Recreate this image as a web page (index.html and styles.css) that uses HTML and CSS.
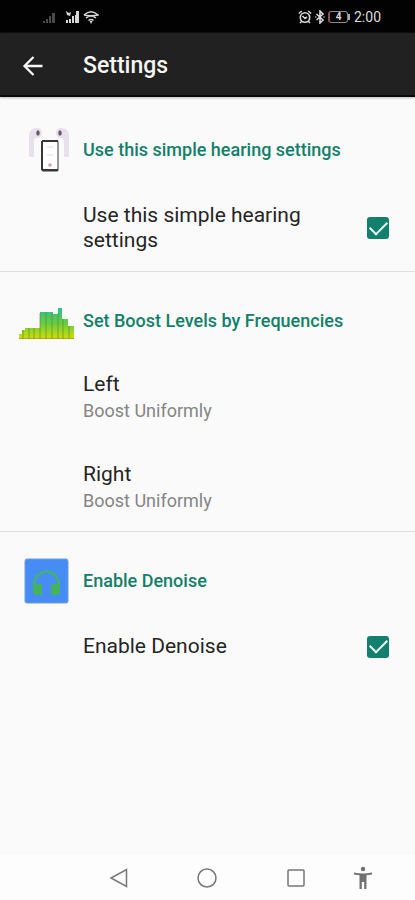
FILE: index.html
```html
<!DOCTYPE html>
<html lang="en">
<head>
<meta charset="utf-8">
<meta name="viewport" content="width=device-width, initial-scale=1">
<title>Settings</title>
<link rel="stylesheet" href="styles.css">
</head>
<body>
<div class="status">
  <div class="status-left">
    <svg width="14" height="14" viewBox="0 0 14 14" fill="#4a4a4a"><path d="M0 11h2v2H0zM3 9h2v4H3zM6 6h2v7H6zM9 3h3v10H9z"/></svg>
    <svg class="signal" width="14" height="14" viewBox="0 0 14 14" fill="#d8d8d8"><path d="M0 10h2v3H0zM3 9h2v4H3zM6 6h2v7H6zM10 1h3v12h-3zM0 1l3 2 2-1-1 4-3-1zM9 5h1v8H9z"/></svg>
    <svg width="16" height="14" viewBox="0 0 16 14" fill="none" stroke="#d8d8d8" stroke-width="1.6"><path d="M1 5Q8-1.500 15 5Q8 6.500 1 5M3 8Q8 4 13 8M5.500 10.500Q8 8.500 10.500 10.500"/><path d="M6.500 11h3L8 14z" fill="#d8d8d8" stroke="none"/></svg>
  </div>
  <div class="status-right">
    <svg width="14" height="14" viewBox="0 0 14 14" fill="none" stroke="#d8d8d8" stroke-width="1.600"><circle cx="7" cy="7.500" r="4.700"/><path d="M.8 3.500L3.800 1M13.200 3.500L10.200 1M4.500 6L7 8.500 9 7M3.500 11.500L2 13M10.500 11.500L12 13"/></svg>
    <svg width="10" height="14" viewBox="0 0 10 14" fill="none" stroke="#d8d8d8" stroke-width="1.600"><path d="M1.500 4l6.500 6-3 3V1l3 3-6.500 6M.3 7h1M8.500 7h1"/></svg>
    <div class="battery">4</div>
    <time>2:00</time>
  </div>
</div>
<header class="appbar">
  <button class="back" aria-label="Back"><svg width="24" height="24" viewBox="0 0 24 24" fill="none" stroke="#f5f5f5" stroke-width="2.300"><path d="M21.500 12H4M12.500 3L3.500 12l9 9"/></svg></button>
  <h1>Settings</h1>
</header>
<main>
  <section>
    <div class="head">
      <svg width="56" height="56" viewBox="0 3 56 56">
        <g fill="#e9e0ed"><path d="M10 17c0-5 3-8 8-8 3 0 5 2 5 5s-2 5-5 5c-2 0-3 1-3 3v16h-5z"/><path d="M50 17c0-5-3-8-8-8-3 0-5 2-5 5s2 5 5 5c2 0 3 1 3 3v16h5z"/></g>
        <ellipse cx="19" cy="14" rx="1.700" ry="2.700" fill="#625868"/><ellipse cx="41" cy="14" rx="1.700" ry="2.700" fill="#625868"/>
        <rect x="23" y="22" width="16" height="30" rx="1.500" fill="#fdfdfd" stroke="#777" stroke-width="1.500"/>
        <path d="M23 22h16M23 51h16M23 22v29" stroke="#363636" stroke-width="2"/>
        <path d="M28 28h6M28 36h6" stroke="#ddd"/><circle cx="31" cy="46" r="1.800" fill="#c9aaa9"/>
      </svg>
      <h2>Use this simple hearing settings</h2>
    </div>
    <div class="items">
      <label class="row"><span class="name">Use this simple hearing settings</span><input type="checkbox" checked></label>
    </div>
  </section>
  <section>
    <div class="head">
      <svg width="56" height="56" viewBox="0 0 56 56">
        <defs>
          <linearGradient id="level" gradientUnits="userSpaceOnUse" x1="0" y1="14" x2="0" y2="46"><stop offset="0" stop-color="#27bd9d"/><stop offset=".5" stop-color="#66cd42"/><stop offset="1" stop-color="#d0dd08"/></linearGradient>
        </defs>
        <path fill="url(#level)" d="M0 46v-5h3v-4h3v-2h15V19h13v2h5v-6h4v11h6v7h6v13z"/>
        <path d="M4 37v9M10 35v11M15 35v11M21 20v26M27 19v27M33 20v26M39 20v26M44 26v20M50 33v13" stroke="#65801b" opacity=".6"/>
        <path d="M0 45.500h55" stroke="#93840b" opacity=".5"/>
      </svg>
      <h2>Set Boost Levels by Frequencies</h2>
    </div>
    <div class="items">
      <button class="row"><span class="name">Left<small>Boost Uniformly</small></span></button>
      <button class="row"><span class="name">Right<small>Boost Uniformly</small></span></button>
    </div>
  </section>
  <section>
    <div class="head">
      <svg width="56" height="56" viewBox="0 0 56 56">
        <rect x="6" y="6" width="43" height="44" rx="2" fill="#478cf5" stroke="#6b9fdd"/>
        <path d="M15.500 39V28a12.500 13 0 0 1 24 0v11" fill="none" stroke="#46aa85" stroke-width="3"/>
        <path d="M14 31h9v11h-5q-4 0-4-4zM41 31h-9v11h5q4 0 4-4z" fill="#45b35c"/>
      </svg>
      <h2>Enable Denoise</h2>
    </div>
    <div class="items">
      <label class="row"><span class="name">Enable Denoise</span><input type="checkbox" checked></label>
    </div>
  </section>
</main>
<nav>
  <button aria-label="Back"><svg width="20" height="20" viewBox="0 0 20 20"><path d="M17.500 1.500v17L2 10z"/></svg></button>
  <button aria-label="Home"><svg width="20" height="20" viewBox="0 0 20 20"><circle cx="10" cy="10" r="9"/></svg></button>
  <button aria-label="Recent apps"><svg width="20" height="20" viewBox="0 0 20 20"><rect x="2" y="2" width="16" height="16" rx="1"/></svg></button>
  <button class="access" aria-label="Accessibility"><svg width="20" height="24" viewBox="0 0 20 24"><path class="solid" d="M1 6.500q9 2 18 0v2l-5.500.8V23h-2.300v-7H8.800v7H6.500V9.300L1 8.500z"/><circle class="solid" cx="10" cy="3" r="2.200"/></svg></button>
</nav>
</body>
</html>
```
FILE: styles.css
```css
* { box-sizing: border-box; }
body {
  margin: 0;
  min-height: 100vh;
  display: flex;
  flex-direction: column;
  background: #fafafa;
  color: #252525;
  font-family: Roboto, sans-serif;
}
button {
  padding: 0;
  border: 0;
  background: none;
  color: inherit;
  font: inherit;
  text-align: left;
}
svg { display: block; flex: none; }
.status {
  height: 33px;
  padding: 0 34px 0 43px;
  display: flex;
  align-items: center;
  justify-content: space-between;
  background: #020202;
  color: #dcdcdc;
  font-size: 14px;
}
.status-left, .status-right { display: flex; align-items: center; gap: 3px; }
.signal { margin-left: 6px; }
.battery {
  position: relative;
  width: 20px;
  height: 12px;
  margin-right: 3px;
  border: 1px solid #8a8585;
  border-left: 2px solid #8b4d58;
  border-radius: 3px;
  font-size: 10px;
  font-weight: 700;
  line-height: 10px;
  text-align: center;
}
.battery::after {
  content: "";
  position: absolute;
  top: 2px;
  right: -3px;
  width: 2px;
  height: 6px;
  background: #aaa;
}
.appbar {
  height: 64px;
  padding: 4px 0 0 21px;
  display: flex;
  align-items: center;
  gap: 38px;
  border-bottom: 2px solid #0b0b0b;
  background: #212121;
  color: #f5f5f5;
  box-shadow: 0 1px 2px #bbb;
}
h1, h2 { margin: 0; font-weight: 500; }
h1 { font-size: 23px; line-height: 26px; }
h2 { color: #128069; font-size: 18px; line-height: 24px; }
main { flex: 1; padding-top: 4px; }
section + section { border-top: 1px solid #dedede; }
.head {
  height: 97px;
  padding-left: 19px;
  display: flex;
  align-items: center;
  gap: 8px;
}
.items {
  padding: 3px 26px 18px 83px;
  display: flex;
  flex-direction: column;
  gap: 39px;
}
.row {
  display: flex;
  align-items: center;
  justify-content: space-between;
  gap: 40px;
}
label.row { padding-top: 2px; }
.name { font-size: 21px; line-height: 25px; }
small {
  display: block;
  margin-top: 2px;
  color: #858585;
  font-size: 18px;
  line-height: 24px;
}
input {
  appearance: none;
  width: 22px;
  height: 22px;
  margin: 0;
  flex: none;
  border-radius: 3px;
  background: #12806d;
  display: grid;
  place-items: center;
}
input::before {
  content: "";
  width: 15px;
  height: 8px;
  margin-bottom: 5px;
  border: solid #f1faf8;
  border-width: 0 0 2px 2px;
  transform: rotate(-45deg);
}
nav {
  height: 45px;
  padding: 0 42px 0 109px;
  display: flex;
  align-items: center;
  justify-content: space-between;
  background: #fdfdfd;
}
nav svg { fill: none; stroke: #777; stroke-width: 1.5; }
nav .solid { fill: #707070; stroke: none; }
.access { margin-left: -21px; }
```
